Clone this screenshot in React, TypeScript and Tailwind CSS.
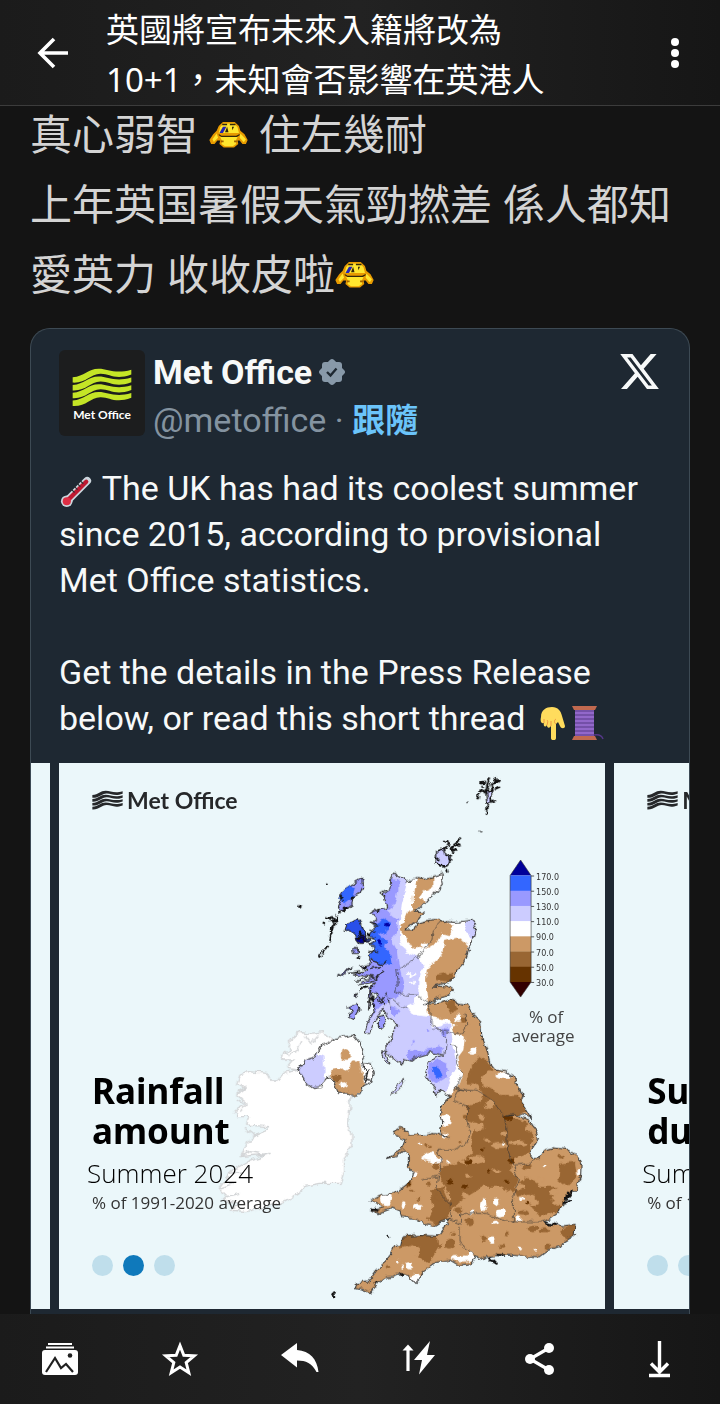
import type { ReactNode } from 'react'

const CJK = "font-['Noto_Sans','Noto_Sans_CJK_TC',sans-serif]"

const LEGEND = ['170.0', '150.0', '130.0', '110.0', '90.0', '70.0', '50.0', '30.0']
const LEGEND_COLORS = ['#3366ff', '#9999ff', '#ccccff', '#ffffff', '#cc9966', '#996633', '#663300']

// [x, y, rx, ry]
type Spot = [number, number, number, number]

const WHITE_SPOTS: Spot[] = [
  [715, 55, 11, 10], [760, 152, 12, 9], [855, 225, 26, 9], [675, 360, 17, 20], [675, 407, 12, 8],
  [630, 470, 18, 14], [650, 482, 14, 8], [610, 480, 6, 5], [685, 485, 6, 5], [580, 522, 12, 9],
  [498, 598, 18, 17], [592, 620, 13, 6], [548, 615, 6, 12], [790, 615, 10, 18], [830, 605, 11, 10],
  [840, 640, 12, 12], [755, 637, 7, 6], [895, 655, 9, 10], [815, 720, 11, 11], [730, 775, 38, 9],
  [750, 762, 10, 9], [588, 835, 16, 14], [568, 797, 9, 8], [532, 785, 4, 5], [545, 800, 4, 4],
  [900, 745, 6, 6], [945, 750, 4, 4], [1078, 515, 6, 12], [905, 595, 8, 4], [975, 500, 4, 4],
  [700, 75, 5, 4], [825, 668, 8, 6], [520, 640, 14, 6], [850, 430, 4, 4], [600, 430, 4, 3],
]

const TAN_SPOTS: Spot[] = [
  [810, 315, 13, 14], [785, 350, 9, 9], [780, 380, 14, 12], [760, 372, 10, 8], [835, 435, 26, 9],
  [895, 430, 30, 8], [770, 478, 24, 13], [740, 487, 24, 8], [830, 512, 13, 6], [745, 530, 9, 6],
  [960, 540, 12, 8], [930, 385, 12, 8], [925, 590, 20, 8], [1000, 575, 12, 10], [850, 400, 9, 6],
  [800, 420, 10, 5], [900, 560, 14, 8], [735, 585, 12, 8],
]

const BROWN_SPOTS: Spot[] = [
  [615, 435, 5, 7], [628, 436, 5, 5], [690, 732, 13, 13], [660, 738, 7, 7], [750, 665, 14, 10],
  [715, 630, 12, 9], [790, 715, 9, 7], [985, 740, 8, 10], [860, 700, 6, 6], [730, 60, 9, 8],
  [650, 495, 8, 12], [565, 552, 9, 9], [625, 552, 4, 5], [655, 590, 16, 10], [940, 685, 14, 8],
  [975, 690, 16, 6], [1020, 470, 8, 5], [920, 500, 12, 10], [845, 740, 8, 6], [735, 350, 7, 6],
  [720, 425, 4, 5], [595, 600, 5, 5], [1040, 610, 14, 10], [910, 635, 16, 8], [1010, 625, 16, 12],
  [700, 700, 8, 5], [575, 570, 5, 4], [480, 795, 8, 6], [505, 800, 5, 5],
]

const DARK_SPOTS: Spot[] = [
  [745, 485, 12, 9], [787, 450, 7, 5], [688, 545, 9, 8], [733, 560, 9, 7], [866, 352, 14, 8],
  [873, 480, 9, 8], [925, 610, 6, 5], [806, 515, 5, 5], [860, 542, 6, 6], [565, 552, 5, 5],
]

function Spots({ items, fill }: { items: Spot[]; fill: string }) {
  return (
    <g fill={fill}>
      {items.map(([x, y, rx, ry], i) => (
        <ellipse key={i} cx={x} cy={y} rx={rx} ry={ry} />
      ))}
    </g>
  )
}

const BRITAIN =
  'M520-378 540-370 560-358 575-360 590-368 610-365 635-370 665-380 673-375 665-358 667-345 650-325 630-308 615-290 595-270 582-265 610-262 595-242 578-230 555-210 580-212 588-230 620-238 645-242 665-235 685-238 720-235 755-240 767-215 760-190 750-165 740-135 730-110 710-90 705-70 680-52 640-42 680-40 700-30 690-20 660-10 635 5 610 10 640 12 665 8 690 0 740 15 755 40 782 65 785 105 802 155 810 190 825 210 855 215 880 230 900 270 912 285 902 302 920 330 935 355 915 345 875 342 860 345 885 342 925 360 945 385 955 415 940 440 928 460 940 475 960 475 970 450 1000 443 1040 448 1070 465 1083 490 1082 530 1070 565 1040 600 1025 615 1015 640 995 655 970 665 1000 675 1030 680 1065 675 1062 705 1030 725 1020 740 980 755 960 770 910 768 880 765 840 765 805 768 790 780 765 770 755 790 715 795 690 780 645 790 615 810 605 830 585 850 560 825 540 820 520 828 500 830 470 850 455 878 430 868 405 862 410 850 445 845 470 810 500 785 520 740 545 735 550 710 600 705 655 708 672 685 690 655 665 662 640 678 610 670 590 655 545 650 540 635 515 625 475 640 450 628 490 620 450 603 485 585 525 580 570 545 580 520 565 500 565 460 550 450 530 468 505 475 545 445 555 420 525 405 520 395 540 382 560 395 565 408 615 405 640 400 665 405 690 415 660 400 665 370 660 345 665 320 690 285 675 280 660 270 650 290 645 265 625 240 615 225 625 190 650 170 675 165 630 158 590 170 570 185 550 178 545 195 520 175 495 150 510 195 500 190 485 155 505 135 515 105 530 80 520 60 500 50 490 25 465 60 450 100 435 100 445 60 465 30 455 10 475-20 455-20 445 30 450-35 470-55 410-45 460-70 400-75 445-90 415-100 455-110 445-135 465-158 445-165 468-180 445-195 470-220 450-230 472-245 455-265 500-280 490-320 510-335 512-360Z'

const IRELAND =
  'M310 95 270 100 240 95 205 125 215 150 190 160 185 180 220 180 200 205 235 210 190 220 175 240 150 240 140 220 85 215 60 225 50 250 75 265 50 285 80 310 45 330 55 350 85 350 80 375 145 380 120 400 100 405 75 450 60 470 110 465 150 460 90 480 40 510 10 545-5 565 20 590 10 600 60 610 30 630 80 635 140 620 190 605 240 575 250 560 300 550 360 550 370 520 370 480 395 440 395 400 385 370 390 300 400 285 340 120Z'

const ULSTER =
  'M235 210 255 180 285 170 305 135 345 115 400 105 420 130 435 165 425 190 455 195 460 220 450 250 430 260 420 280 400 288 380 278 355 280 340 240 325 228 315 240 305 262 280 265 255 245Z'

function RainfallMap() {
  return (
    <g transform="translate(161 237) scale(.3333)" strokeLinejoin="round">
      <defs>
        <filter id="coast" x="-30%" y="-10%" width="160%" height="120%" colorInterpolationFilters="sRGB">
          <feTurbulence type="fractalNoise" baseFrequency=".045" numOctaves="3" seed="4" />
          <feDisplacementMap in="SourceGraphic" scale="19" xChannelSelector="R" yChannelSelector="G" />
        </filter>
        <clipPath id="britain">
          <path d={BRITAIN} />
        </clipPath>
        <clipPath id="ulster">
          <path d={ULSTER} />
        </clipPath>
      </defs>

      <g filter="url(#coast)">
        <path d={IRELAND} fill="#fff" stroke="#d2d4d6" strokeWidth="4" />
        <path d="M60 250 75 262 55 275M50 300 78 315 60 335M75 385 100 405 120 398M62 470 90 455 130 462M30 520 70 515M-2 565 40 550M20 590 60 580M205 165 230 150 245 120M255 105 275 130 300 100" fill="none" stroke="#d2d4d6" strokeWidth="4" />
        <path d={ULSTER} fill="#fff" />
        <g clipPath="url(#ulster)">
          <path d="M220 200 290 160 310 170 315 240 290 280 230 260Z" fill="#ccccff" />
          <path d="M330 210 365 205 380 215 400 180 420 190 425 220 435 260 400 295 350 280Z" fill="#cc9966" />
          <ellipse cx="378" cy="163" rx="16" ry="16" fill="#cc9966" />
          <ellipse cx="352" cy="234" rx="12" ry="10" fill="#996633" />
          <ellipse cx="370" cy="255" rx="10" ry="8" fill="#fff" />
          <ellipse cx="379" cy="200" rx="11" ry="14" fill="#fff" />
        </g>
        <path d={ULSTER} fill="none" stroke="#333" strokeWidth="3" />
        <path d="M425 195 440 215 430 235 450 240M445 205 435 250" fill="none" stroke="#222" strokeWidth="4" />

        <path d={BRITAIN} fill="#cc9966" />
        <g clipPath="url(#britain)">
          <path
            d="M380-400H790V-100L620 0 625 50 690 60 705 105 735 110 730 150 715 170 725 230 700 280 660 300 380 300Z"
            fill="#fff"
          />
          <path
            d="M590-380 640-380 640-340 625-330 610-325 595-305 615-292 590-270 615-265 595-240 660-245 700-225 690-195 665-200 650-170 625-155 600-160 575-155 560-180 540-210 560-260 580-270 578-310Z"
            fill="#cc9966"
          />
          <path
            d="M675-180 710-190 730-175 745-160 735-100 700-50 710-25 640 20 625 0 618-60 620-90 650-120 670-140Z"
            fill="#cc9966"
          />
          <path d="M740-250 775-240 770-190 755-185 735-210Z" fill="#ccccff" />
          <path
            d="M500-390 565-365 555-330 545-290 540-240 540-180 560-145 595-130 610-100 595-60 595-20 580 10 560 20 580 45 625 50 640 80 690 70 700 140 710 190 690 240 680 270 640 300 380 250 360-200Z"
            fill="#ccccff"
          />
          <path
            d="M510-365 535-360 535-330 525-290 500-270 520-250 535-240 530-200 515-180 530-150 535-110 550-50 545-20 510 0 480 20 380 140 360-270Z"
            fill="#9999ff"
          />
          <path d="M510 20 540 30 530 45 510 40ZM560 148 600 152 665 140 665 170 570 185ZM630 190 650 180 678 195 682 230 650 250 625 235Z" fill="#9999ff" />
          <path d="M640 200 660 205 668 230 645 235Z" fill="#3366ff" />
          <path
            d="M465-230 490-245 510-235 508-210 480-195 500-180 495-160 510-140 515-105 480-110 440-130 440-200Z"
            fill="#3366ff"
          />
          <path d="M665 85 685 90 680 108 665 104ZM620 85 632 92 622 100ZM575 120 582 122 575 138Z" fill="#9999ff" />
          <ellipse cx="500" cy="-225" rx="7" ry="7" fill="#0000a8" />
          <ellipse cx="480" cy="-172" rx="6" ry="8" fill="#0000a8" />
          <path
            d="M775 170 802 180 815 210 790 225 785 250 840 285 895 285 925 335 870 350 925 370 940 410 925 460 875 480 870 510 895 530 880 580 840 560 790 560 740 590 690 630 690 580 660 540 665 500 710 490 755 460 755 420 765 380 740 360 740 320 785 305 790 280 765 250 740 250 755 200Z"
            fill="#996633"
          />
          <path d="M1020 490 1065 485 1070 530 1040 560 1015 540ZM880 560 920 530 960 560 1010 560 1000 600 960 610 930 580 890 590ZM930 615 990 600 1010 630 960 650Z" fill="#996633" />
          <path d="M630 570 670 560 695 620 670 680 620 660 640 620Z" fill="#996633" />
          <path d="M545 700 600 700 650 705 655 740 625 790 590 765 605 745 575 735 540 745Z" fill="#996633" />
          <path d="M1020 690 1070 670 1060 710 1035 718ZM675 8 705 0 712 30 690 42Z" fill="#996633" />
          <path d="M650-75 700-85 695-55 650-60Z" fill="#996633" />
          <Spots items={TAN_SPOTS} fill="#cc9966" />
          <Spots items={BROWN_SPOTS} fill="#996633" />
          <Spots items={DARK_SPOTS} fill="#663300" />
          <Spots items={WHITE_SPOTS} fill="#fff" />
          <path d="M565-85 572-70 585-80M570-50 588-55" stroke="#fff" strokeWidth="6" fill="none" />
          <ellipse cx="625" cy="-320" rx="14" ry="8" fill="#fff" />
          <ellipse cx="615" cy="-165" rx="10" ry="8" fill="#fff" />
        </g>
        <path d={BRITAIN} fill="none" stroke="#333" strokeWidth="3" />

        {/* region borders */}
        <g fill="none" stroke="#333" strokeWidth="2">
          <path d="M665-235 640-210 635-180 610-150 595-130 565-110 530-90 535-50 520-25 560-15 590-15 620 5M500-15 530 10 565 28" />
          <path d="M620 5 630 30 630 65 660 90 680 110 675 160M690 130 710 140 710 190 725 220 705 265 740 270M640 85 720 105 740 75 735 40" />
          <path d="M705 265 780 275 820 305 850 345 860 380 862 450 880 495 930 490 960 470M720 265 700 300 745 320 740 360 750 400 740 430 700 450 655 450 665 500 655 530 600 540" />
          <path d="M655 530 650 570 690 610 695 660 720 670 725 640 800 640 850 660 880 665 880 600 895 540 880 495M720 680 720 730 755 755 765 770M880 665 970 665" />
        </g>

        {/* islands */}
        <g fill="#9999ff" stroke="#222" strokeWidth="3">
          <path d="M425-365 428-340 420-320 400-310 395-285 370-265 355-280 365-305 355-320 385-340 400-350Z" />
          <path d="M365-325 390-345 408-335 400-310 375-290 360-310Z" fill="#3366ff" stroke="none" />
          <path d="M415-245 425-220 435-195 450-180 425-170 405-200 375-210 380-225 400-235Z" fill="#2a50ea" />
          <path d="M405-190 435-195 445-175 420-170Z" fill="#000099" />
          <path d="M398-155 412-155 412-140 400-140ZM380 20 395 15 415 10 420 30 405 55 385 45 400 35ZM475 50 490 45 498 70 490 85 475 80Z" />
          <path d="M515 285 530 255 550 238 552 255 535 275Z" fill="#ccccff" stroke="#555" />
          <path d="M352-75 385-95 395-98 370-80ZM402-10 412-20 405-5Z" />
        </g>
        <g fill="none" stroke="#111" strokeWidth="7" strokeDasharray="14 4">
          <path d="M380-275 355-260M320-248 350-240 328-232M338-240 335-200 325-190M342-225 330-175M325-165 302-128M305-233 315-230" />
          <path d="M350-250 345-220M328-245 345-255M330-210 340-200M362-318 372-300M372-282 385-272M398-310 388-296M412-190 440-175M418-205 430-185M440-200 452-190" />
          <path d="M235-282 244-278M318-345 322-342M410-130 425-125M425-95 440-105M455-5 462 20M415-30 445-40" />
        </g>
        <g fill="none" stroke="#222" strokeWidth="3">
          <path d="M445-210 470-205M440-185 470-190M445-150 475-145M430-75 470-65 490-90M440-50 480-70M470-25 480 10 500-20M505-5 510 25" />
          <path d="M460-270 480-275 478-262M495-330 480-322 495-310M450-230 475-225M455-120 490-105 500-115M450-95 480-100M452-15 458-45M445 5 460-10M480-10 490 15M385-80 430-85M405-60 440-65" strokeWidth="4" />
        </g>

        {/* Orkney */}
        <g transform="translate(540 -720)" fill="#ccccff" stroke="#111" strokeWidth="4">
          <path d="M110 272 130 265 135 290 150 285 155 300 140 318 108 312Z" />
          <path d="M132 240 148 250 142 258M150 262 172 270M160 280 155 258 170 245 182 236M160 250 178 258M138 325 140 338M106 290 120 300M125 270 140 262M120 310 135 322M145 290 152 310" fill="none" strokeWidth="6" />
          {/* Shetland */}
          <path d="M255 90 275 88 270 125 262 135Z" />
          <path d="M270 55 262 80M285 52 290 62 272 75M298 56 282 72M240 70 258 68M235 90 255 100M236 100 232 118M262 72 258 100M275 75 278 95M285 92 300 85M268 110 280 125M263 125 261 165M245 78 250 82" fill="none" strokeWidth="7" />
          <path d="M204 126 206 128M236 213 240 215" strokeWidth="7" />
        </g>

        <path d="M335 885 342 878 350 876M345 885 338 888M503 708 508 710" stroke="#111" strokeWidth="7" />
        <path d="M465 850 470 845M540 820 548 828M1040 600 1045 575M1028 610 1050 605M1060 570 1045 590M975 668 1010 675M830 764 855 766M805 772 815 782 830 790 820 780M452 625 475 632" fill="none" stroke="#111" strokeWidth="7" />
      </g>
    </g>
  )
}

function MapLegend() {
  return (
    <g>
      <path d="M451 112.5 461.500 97 472 112.5Z" fill="#000099" />
      {LEGEND_COLORS.map((color, i) => (
        <rect key={color} x="451" y={112.5 + i * 15.2} width="21" height="15.5" fill={color} />
      ))}
      <path d="M451 219 461.500 234 472 219Z" fill="#330000" />
      <path d="M451 112.500 461.500 97 472 112.500V219L461.500 234 451 219Z" fill="none" stroke="#333" strokeWidth=".6" />
      {LEGEND.map((label, i) => (
        <g key={label}>
          <path d={`M472 ${113 + i * 15.2}h3`} stroke="#333" strokeWidth=".8" />
          <text x="477" y={116.5 + i * 15.2} fontSize="8" fill="#333" fontFamily="DejaVu Sans, sans-serif">
            {label}
          </text>
        </g>
      ))}
      <g fontSize="17" fill="#444" textAnchor="middle" fontFamily="Open Sans, sans-serif">
        <text x="487" y="260">% of</text>
        <text x="484" y="279">average</text>
      </g>
    </g>
  )
}

function Waves({ className }: { className: string }) {
  return (
    <svg viewBox="128 138 178 118" preserveAspectRatio="none" className={className} fill="currentColor" aria-hidden="true">
      {[0, 23, 46, 69].map((dy) => (
        <path
          key={dy}
          transform={`translate(0 ${dy})`}
          d="M130 168C165 166 175 143 207 143C235 143 255 160 304 146V160C255 178 240 157 212 158C182 159 170 186 130 184Z"
        />
      ))}
    </svg>
  )
}

interface SlideProps {
  title: [string, string]
  active: number
  children?: ReactNode
}

function Slide({ title, active, children }: SlideProps) {
  return (
    <article className="grid aspect-square w-[83%] shrink-0 overflow-hidden bg-[#ebf7fa] text-black">
      <svg viewBox="0 0 546 546" className="[grid-area:1/1] w-full" aria-hidden="true">
        {children}
      </svg>
      <div className="[grid-area:1/1] z-10 flex flex-col justify-between pt-[23px] pr-7 pb-[33px] pl-7">
        <div className="flex items-center gap-1 pl-[5px] text-[#26282a]">
          <Waves className="h-5 w-[31px]" />
          <span className="font-['Lato',sans-serif] text-[23px] leading-7 font-bold">Met Office</span>
        </div>
        <div>
          <h2 className="pl-[5px] font-['Noto_Sans',sans-serif] text-[35px] leading-10 font-bold">
            {title[0]}
            <br />
            {title[1]}
          </h2>
          <p className="pt-1 font-['Open_Sans',sans-serif] text-[26px] leading-9 font-light">Summer 2024</p>
          <p className="pl-[5px] font-['Open_Sans',sans-serif] text-[17px] leading-6 text-[#333]">% of 1991-2020 average</p>
          <div className="flex gap-[10px] pt-10 pl-[5px]">
            {[0, 1, 2].map((i) => (
              <span key={i} className={`size-[21px] rounded-full ${i === active ? 'bg-[#0f79bb]' : 'bg-[#bfdeeb]'}`} />
            ))}
          </div>
        </div>
      </div>
    </article>
  )
}

function Smiley() {
  return (
    <svg viewBox="32 32 112 80" className="inline-block h-[28px] w-[39px] align-[1px]" role="img" aria-label="smiley">
      <path d="M72 35H106L118 46 122 60 134 70 143 86 138 98 128 98 120 88 114 88 116 98 104 108H74L62 98 64 88 56 88 48 98 38 98 33 86 44 70 54 60 60 46Z" fill="#e89a00" />
      <path d="M74 39H104L114 50 118 66H60L64 50ZM42 84 54 68 58 80 46 92ZM122 68 138 84 132 93 120 80ZM64 78H114L108 90 110 98 100 104H78L68 98 70 90Z" fill="#ffe62e" />
      <path d="M70 40h14v4H70zM92 40h16v4H92zM60 69 68 74H110L120 69V73L112 78H68L60 73Z" fill="#33260a" />
      <path d="M72 48H82L72 66H62Z" fill="#2424b8" />
      <path d="M84 48 78 64H88ZM98 48 104 48 99 58Z" fill="#33260a" />
      <path d="M66 88h8v5h-8zM104 88h8v5h-8z" fill="#a36400" />
    </svg>
  )
}

function Thermometer() {
  return (
    <svg viewBox="0 0 36 36" className="inline-block size-[35px] align-[-9px]" role="img" aria-label="thermometer">
      <path d="M8 28 29 7" stroke="#ccd6dd" strokeWidth="8" strokeLinecap="round" />
      <circle cx="8" cy="28" r="6" fill="#ccd6dd" />
      <path d="M8 28 28 8" stroke="#be1931" strokeWidth="4.500" strokeLinecap="round" />
      <circle cx="8" cy="28" r="4.200" fill="#dd2e44" />
      <path d="m13 16 3 3m0-6 3 3m0-6 3 3m0-6 3 3" stroke="#292f33" strokeWidth="1.200" />
    </svg>
  )
}

function PointDown() {
  return (
    <svg viewBox="0 0 36 36" className="inline-block size-9 align-[-10px]" role="img" aria-label="pointing down">
      <path d="M7 13C7 6 12 3 18 3C24 3 27 7 28 12L31 22C31 25 27 25 26 22L24 18 22 20V34C22 37 17 37 17 34V22C15 25 13 24 13 21C11 24 9 22 10 19C7 20 6 17 7 13Z" fill="#ffdc5d" />
      <path d="M13 21C14 18 14 17 13 16M17 22V17M10 19V15M22 20C20 19 20 16 22 15" fill="none" stroke="#ef9645" strokeWidth="1" />
    </svg>
  )
}

function Thread() {
  return (
    <svg viewBox="0 0 36 36" className="inline-block size-9 align-[-10px]" role="img" aria-label="thread">
      <path d="M2 2H27L25 6H4ZM4 32H25L27 36H2Z" fill="#c1694f" />
      <path d="M5 6H24V32H5Z" fill="#7450a8" />
      <path d="M5 9H24M5 13H24M5 17H24M5 21H24M5 25H24M5 29H24" stroke="#9268ca" strokeWidth="1.800" />
      <path d="M24 31C30 30 32 32 33 35" fill="none" stroke="#553788" strokeWidth="1.500" />
    </svg>
  )
}

function Verified() {
  return (
    <svg viewBox="0 0 28 28" className="size-7" role="img" aria-label="Verified">
      <g fill="#8899a9">
        <rect x="4" y="4" width="20" height="20" rx="3" />
        <rect x="4" y="4" width="20" height="20" rx="3" transform="rotate(45 14 14)" />
      </g>
      <path d="m9 14 3.500 3.500 6-7" fill="none" stroke="#1e2832" strokeWidth="2.400" />
    </svg>
  )
}

const ACTIONS: { label: string; icon: ReactNode }[] = [
  {
    label: 'Gallery',
    icon: (
      <>
        <path d="M6 3H30M4 6.500H32" stroke="currentColor" strokeWidth="1.800" />
        <rect x="0" y="9" width="36" height="25" rx="3" fill="currentColor" />
        <path d="m4 31 9-14 6 10 5-4 7 8" fill="none" stroke="#202020" strokeWidth="2.200" />
        <circle cx="28" cy="14.500" r="2.300" fill="#202020" />
      </>
    ),
  },
  {
    label: 'Favourite',
    icon: (
      <path d="m18 4.500 3.800 9.700 10.400.6-8 6.700 2.600 10.200L18 26.100l-8.800 5.600 2.600-10.200-8-6.700 10.400-.6z" fill="none" stroke="currentColor" strokeWidth="3" />
    ),
  },
  {
    label: 'Reply',
    icon: <path d="M-1 14 15 2V9C28 10 35 18 36.500 31H34.500C30 22 24 19.500 15 19.500V26.500Z" fill="currentColor" />,
  },
  {
    label: 'Boost',
    icon: (
      <>
        <path d="M6 30V8" stroke="currentColor" strokeWidth="3.200" />
        <path d="M.5 9.500 6 3.500 11.500 9.500Z" fill="currentColor" />
        <path d="M28 0 12 19H20L17 33.500 33 14H25Z" fill="currentColor" />
      </>
    ),
  },
  {
    label: 'Share',
    icon: (
      <>
        <path d="M27 7 8 18 27 29" fill="none" stroke="currentColor" strokeWidth="3.200" />
        <g fill="currentColor">
          <circle cx="27" cy="7" r="5" />
          <circle cx="8" cy="18" r="5" />
          <circle cx="27" cy="29" r="5" />
        </g>
      </>
    ),
  },
  {
    label: 'Jump to end',
    icon: <path d="M17.500 0V31M9 22.500 17.500 31 26 22.500M7 34.500H28" fill="none" stroke="currentColor" strokeWidth="3.400" />,
  },
]

const BAR = 'bg-linear-to-r from-[#1b1b1b] via-[#222222] to-[#161616]'

export default function App() {
  return (
    <div className="flex min-h-screen flex-col bg-[#141414]">
      <header className={`flex items-center border-b border-[#3c3c3c] pr-5 pl-[34px] text-white ${BAR}`}>
        <button type="button" aria-label="Back" className="shrink-0">
          <svg viewBox="0 0 36 36" className="size-9" fill="none" stroke="currentColor" strokeWidth="3.600">
            <path d="M34 18H7M20 4 6 18 20 32" />
          </svg>
        </button>
        <h1 className={`grow pt-[5px] pl-[36px] text-[33px] leading-[50px] ${CJK}`}>
          英國將宣布未來入籍將改為
          <br />
          10+1，未知會否影響在英港人
        </h1>
        <button type="button" aria-label="More" className="flex w-[50px] shrink-0 flex-col items-center gap-[3px]">
          <span className="size-2 rounded-full bg-white" />
          <span className="size-2 rounded-full bg-white" />
          <span className="size-2 rounded-full bg-white" />
        </button>
      </header>

      <main className="grow px-[30px]">
        <div className={`flex flex-col gap-[14px] text-[42px] leading-[56px] text-[#d4d4d4] ${CJK}`}>
          <p>
            真心弱智 <Smiley /> 住左幾耐
          </p>
          <p>上年英国暑假天氣勁撚差 係人都知</p>
          <p>
            愛英力 收收皮啦
            <Smiley />
          </p>
        </div>

        <section className="mt-[26px] overflow-hidden rounded-t-[20px] border border-b-0 border-[#3d4a54] bg-[#1e2832] pb-[5px] font-['Roboto','Noto_Sans_CJK_TC',sans-serif] text-[#f7f9f9]">
          <div className="flex items-start gap-2 px-7 pt-[19px]">
            <div className="mt-0.5 flex size-[86px] flex-col items-center justify-center rounded-md bg-[#1c1d1e] pt-1">
              <Waves className="h-[40px] w-[60px] text-[#c4e526]" />
              <span className="font-['Lato',sans-serif] text-[12px] leading-[16px] font-bold text-white">Met Office</span>
            </div>
            <div className="grow leading-[48px]">
              <div className="flex items-center gap-[6px]">
                <span className="text-[34px] font-bold">Met Office</span>
                <Verified />
              </div>
              <div className="text-[34px] text-[#8493a0]">
                @metoffice ·{' '}
                <a href="#follow" className="text-[33px] font-bold text-[#6bc4fa]">
                  跟隨
                </a>
              </div>
            </div>
            <a href="#post" aria-label="View on X" className="mt-[2px]">
              <svg viewBox="0 0 24 24" className="size-[43px]" fill="currentColor">
                <path d="M18.244 2.250h3.308l-7.227 8.260 8.502 11.240H16.170l-5.214-6.817L4.990 21.750H1.680l7.730-8.835L1.254 2.250H8.080l4.713 6.231zm-1.161 17.520h1.833L7.084 4.126H5.117z" />
              </svg>
            </a>
          </div>

          <div className="px-7 pt-5 pb-[22px] text-[34px] leading-[46px]">
            <p>
              <Thermometer /> The UK has had its coolest summer since 2015, according to provisional Met Office statistics.
            </p>
            <p className="pt-[46px]">
              Get the details in the Press Release below, or read this short thread <PointDown />
              <Thread />
            </p>
          </div>

          <div className="flex gap-[9px] overflow-hidden">
            <div className="w-[19px] shrink-0 bg-[#ebf7fa]" />
            <Slide title={['Rainfall', 'amount']} active={1}>
              <RainfallMap />
              <MapLegend />
            </Slide>
            <Slide title={['Sunshine', 'duration']} active={2} />
          </div>
        </section>
      </main>

      <footer className={`grid h-[90px] grid-cols-6 items-center text-white ${BAR}`}>
        {ACTIONS.map(({ label, icon }) => (
          <button key={label} type="button" aria-label={label} className="flex justify-center">
            <svg viewBox="0 0 36 36" className="size-9 overflow-visible">
              {icon}
            </svg>
          </button>
        ))}
      </footer>
    </div>
  )
}
